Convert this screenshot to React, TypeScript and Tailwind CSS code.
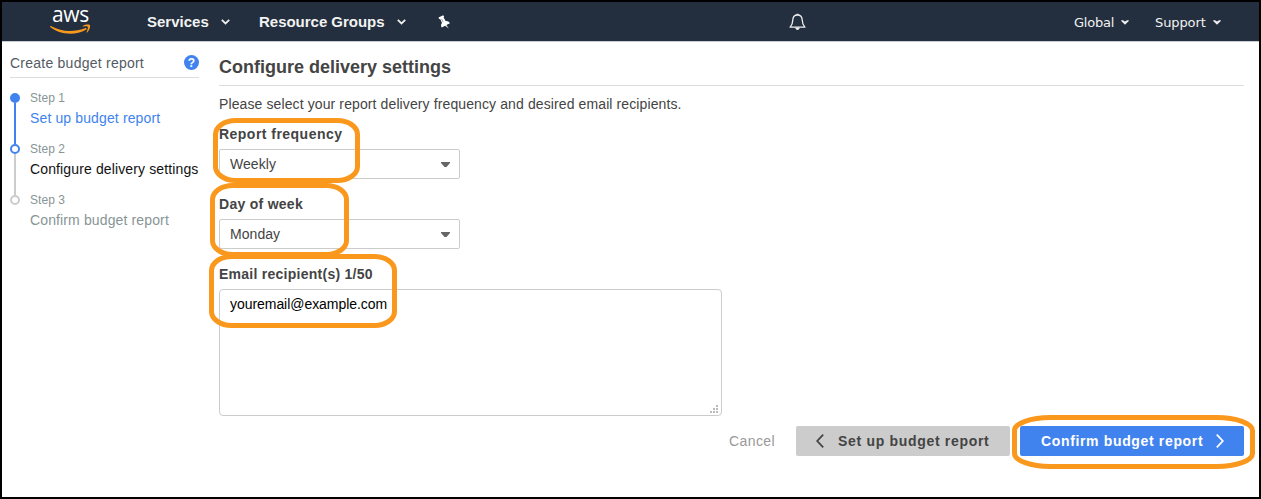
const sans = "font-['Liberation_Sans',Arial,sans-serif]";

function Caret({ className = "" }: { className?: string }) {
  return (
    <svg width="9" height="6" viewBox="0 0 9 6" className={className}>
      <path d="M0.8 0.8 L4.5 4.4 L8.2 0.8" fill="none" stroke="#eee" strokeWidth="1.8" />
    </svg>
  );
}

function SmallCaret({ className = "" }: { className?: string }) {
  return (
    <svg width="8" height="5" viewBox="0 0 8 5" className={className}>
      <path d="M0.2 0.3 H2 L4 1.5 L6 0.3 H7.8 V1 L4 4.7 L0.2 1 Z" fill="#eee" />
    </svg>
  );
}

function Logo() {
  return (
    <div className="ml-[47px] flex w-[43px] flex-col items-center">
      <span className="h-[15px] font-['Open_Sans','Noto_Sans',sans-serif] text-[21px] leading-[11px] font-medium tracking-[-0.3px] text-white">
        aws
      </span>
      <svg width="43" height="11" viewBox="0 0 43 11" className="block">
        <path d="M1 2.2 C1.4 1.8 1.8 2 2.3 2.3 C13 8.2 25 8.2 36 4.2 C37.3 3.7 38.2 4.9 37 5.8 C26 12 10 10.5 1.2 3 Z" fill="#f7981f" />
        <path d="M33.8 1.9 C36 0.4 39.7 0.2 40.8 1 C41.7 2.2 40.6 6.3 38.2 8.4 C37.7 8.7 37.4 8.4 37.6 7.9 C38.4 6 39.3 3.7 38.8 2.9 C38.1 2.1 35.8 2.4 34.2 2.5 C33.6 2.5 33.3 2.2 33.8 1.9 Z" fill="#f7981f" />
      </svg>
    </div>
  );
}

function Pin() {
  return (
    <svg width="13" height="14" viewBox="0 0 13 14" className="ml-[1px]" fill="#fff">
      <path d="M0.5 2.5 L5.2 0.2 L6.2 1.7 L5.6 2.6 L7.6 6 C9.6 5.8 11 6.7 11.9 8.3 L8.4 10.1 L10.8 13.4 L7.1 10.7 L3.7 12.6 C2.7 10.8 2.9 9.3 4 8 L2.3 4.3 L1.1 4.1 Z" />
      <path d="M3.5 3.8 L5.2 7.2" stroke="#7b838e" strokeWidth="0.7" />
    </svg>
  );
}

function Header() {
  return (
    <header className="flex h-[40px] shrink-0 items-center border-b border-[#c8ccd0] bg-[#232f3e] text-[#f2f2f2]">
      <Logo />
      <div className="ml-[55px] flex w-[112px] items-center text-[15px] font-bold">
        <span className="w-[74px] pt-[1px]">Services</span>
        <Caret />
      </div>
      <div className="flex w-[178px] items-center text-[15px] font-bold">
        <span className="w-[138px] pt-[1px] tracking-[-0.02px]">Resource Groups</span>
        <Caret />
      </div>
      <Pin />
      <svg width="17" height="18" viewBox="0 0 17 18" className="ml-[338px]">
        <path d="M8.5 2 C5.4 2 3.9 4.2 3.8 7 C3.7 10.5 3 12.2 1.1 14.2 H15.9 C14 12.2 13.3 10.5 13.2 7 C13.1 4.2 11.6 2 8.5 2 Z" fill="none" stroke="#eee" strokeWidth="1.3" strokeLinejoin="round" />
        <path d="M7.5 0.8 H9.5 V2 H7.5 Z M6.2 14.5 H10.8 C10.5 17.7 6.5 17.7 6.2 14.5 Z" fill="#eee" />
      </svg>
      <div className="ml-auto flex items-center pt-[1px] font-['DejaVu_Sans',Verdana,sans-serif] text-[13px]">
        <span className="w-[47px] pt-[1px] tracking-[-0.2px]">Global</span>
        <SmallCaret />
        <span className="ml-[26px] w-[58px] pt-[1px] tracking-[-0.1px]">Support</span>
        <SmallCaret className="mr-[38px]" />
      </div>
    </header>
  );
}

function Step({ n, label, color, dot, line }: { n: number; label: string; color: string; dot: string; line: string }) {
  return (
    <li className="flex h-[51px]">
      <div className="flex w-[20px] shrink-0 flex-col items-start">
        <span className={`size-[10px] shrink-0 rounded-full border-2 ${dot}`} />
        <span className={`ml-[4px] w-[2px] flex-1 ${line}`} />
      </div>
      <div className="-mt-[4px] whitespace-nowrap">
        <div className="h-[18px] text-[12px] leading-[18px] tracking-[0.05px] text-[#879596]">Step {n}</div>
        <div className={`mt-[1px] text-[14px] leading-[20px] tracking-[0.13px] ${color}`}>{label}</div>
      </div>
    </li>
  );
}

function Sidebar() {
  return (
    <aside className="ml-[8px] w-[189px] shrink-0">
      <div className="flex h-[36px] items-center justify-between border-b border-[#ddd] pt-[6px]">
        <h2 className="pt-[2px] text-[14px] tracking-[0.24px] text-[#545b64]">Create budget report</h2>
        <span className="flex size-[15px] items-center justify-center rounded-full bg-[#4183ee] text-[12px] leading-none font-bold text-white">?</span>
      </div>
      <ol className="pt-[15px]">
        <Step n={1} label="Set up budget report" color="text-[#4183ee]" dot="border-[#4183ee] bg-[#4183ee]" line="bg-[#4183ee]" />
        <Step n={2} label="Configure delivery settings" color="text-[#111]" dot="border-[#4183ee] bg-white" line="bg-[#ccc]" />
        <Step n={3} label="Confirm budget report" color="text-[#879596]" dot="border-[#ccc] bg-white" line="bg-transparent" />
      </ol>
    </aside>
  );
}

function Select({ label, value, tracking }: { label: string; value: string; tracking: string }) {
  return (
    <div className="h-[70px]">
      <div className={`h-[25px] text-[14px] leading-[20px] font-bold ${tracking}`}>{label}</div>
      <div className="flex h-[30px] w-[241px] items-center justify-between rounded-[2px] border border-[#ccc] pr-[9px] pl-[10px] text-[14px] tracking-[0.05px]">
        <span>{value}</span>
        <svg width="9" height="5" viewBox="0 0 9 5" className="mt-px">
          <path d="M0 0 H9 V1 L5.5 5 H3.5 L0 1 Z" fill="#666" />
        </svg>
      </div>
    </div>
  );
}

function Highlights() {
  return (
    <svg width="1261" height="499" viewBox="0 0 1261 499" className="pointer-events-none absolute top-0 left-0" fill="none" stroke="#fa981d" strokeWidth="5">
      <rect x="215.5" y="120.5" width="142" height="60" rx="20" ry="14" />
      <rect x="212.5" y="185.5" width="134" height="69" rx="20" ry="14" />
      <rect x="211.5" y="256.5" width="183" height="69" rx="20" ry="14" />
      <rect x="1014.5" y="417.5" width="238" height="49" rx="36" ry="13" />
    </svg>
  );
}

export default function App() {
  return (
    <div className={`relative flex h-[499px] w-[1261px] flex-col overflow-hidden border-2 border-black bg-white text-[#444] ${sans}`}>
      <Header />
      <div className="flex flex-1">
        <Sidebar />
        <main className="ml-[20px] w-[1025px]">
          <h1 className="h-[44px] border-b border-[#ddd] pt-[13px] text-[18px] leading-[24px] font-bold">
            Configure delivery settings
          </h1>
          <p className="mt-[8px] h-[30px] text-[14px] leading-[20px] tracking-[0.11px]">
            Please select your report delivery frequency and desired email recipients.
          </p>
          <Select label="Report frequency" value="Weekly" tracking="tracking-[0.47px]" />
          <Select label="Day of week" value="Monday" tracking="tracking-[0.28px]" />
          <div className="h-[25px] text-[14px] leading-[20px] font-bold tracking-[0.26px]">Email recipient(s) 1/50</div>
          <div className="flex h-[127px] w-[503px] justify-between rounded-[4px] border border-[#ccc] text-[14px] leading-[20px] text-black">
            <span className="pt-[4px] pl-[10px] tracking-[-0.05px]">youremail@example.com</span>
            <svg width="8" height="8" viewBox="0 0 8 8" className="mr-[3px] mb-[2px] self-end" fill="#bbb">
              <path d="M6 0h2v2h-2z M3 3h2v2h-2z M6 3h2v2h-2z M0 6h2v2h-2z M3 6h2v2h-2z M6 6h2v2h-2z" />
            </svg>
          </div>
          <div className="mt-[10px] flex h-[30px] items-center justify-end text-[14px] whitespace-nowrap">
            <span className="mr-[21px] tracking-[0.4px] text-[#999]">Cancel</span>
            <div className="flex h-[30px] w-[214px] items-center rounded-[2px] bg-[#ccc] pl-[20px] font-bold">
              <svg width="8" height="14" viewBox="0 0 8 14" fill="none" stroke="#444" strokeWidth="1.8">
                <path d="M7.2 0.7 L1.2 7 L7.2 13.3" />
              </svg>
              <span className="ml-[14px] tracking-[0.69px]">Set up budget report</span>
            </div>
            <div className="ml-[10px] flex h-[30px] w-[224px] items-center rounded-[2px] bg-[#4183ee] pl-[21px] font-bold text-white">
              <span className="w-[175px] tracking-[0.65px]">Confirm budget report</span>
              <svg width="8" height="14" viewBox="0 0 8 14" fill="none" stroke="#fff" strokeWidth="1.8">
                <path d="M0.8 0.7 L6.8 7 L0.8 13.3" />
              </svg>
            </div>
          </div>
        </main>
      </div>
      <div className="absolute -top-[2px] -left-[2px]">
        <Highlights />
      </div>
    </div>
  );
}
